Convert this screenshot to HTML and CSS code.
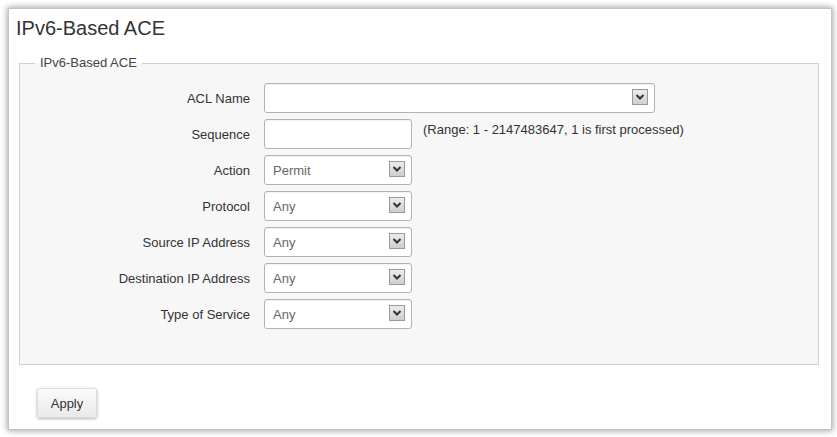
FILE: index.html
```html
<!DOCTYPE html>
<html>
<head>
<meta charset="utf-8">
<link rel="stylesheet" href="styles.css">
</head>
<body>
<div class="panel">
  <h1 class="title">IPv6-Based ACE</h1>
  <fieldset class="box">
    <legend class="legend">IPv6-Based ACE</legend>
    <div class="form">
      <label class="lbl">ACL Name</label>
      <div class="ctrl select wide"><span class="val"></span><span class="arrow"><svg width="10" height="8" viewBox="0 0 10 8"><path d="M1.5 2 L5 5.5 L8.5 2" fill="none" stroke="#333" stroke-width="2"/></svg></span></div>

      <label class="lbl">Sequence</label>
      <div class="line"><div class="ctrl input"></div><span class="hint">(Range: 1 - 2147483647, 1 is first processed)</span></div>

      <label class="lbl">Action</label>
      <div class="ctrl select"><span class="val">Permit</span><span class="arrow"><svg width="10" height="8" viewBox="0 0 10 8"><path d="M1.5 2 L5 5.5 L8.5 2" fill="none" stroke="#333" stroke-width="2"/></svg></span></div>

      <label class="lbl">Protocol</label>
      <div class="ctrl select"><span class="val">Any</span><span class="arrow"><svg width="10" height="8" viewBox="0 0 10 8"><path d="M1.5 2 L5 5.5 L8.5 2" fill="none" stroke="#333" stroke-width="2"/></svg></span></div>

      <label class="lbl">Source IP Address</label>
      <div class="ctrl select"><span class="val">Any</span><span class="arrow"><svg width="10" height="8" viewBox="0 0 10 8"><path d="M1.5 2 L5 5.5 L8.5 2" fill="none" stroke="#333" stroke-width="2"/></svg></span></div>

      <label class="lbl">Destination IP Address</label>
      <div class="ctrl select"><span class="val">Any</span><span class="arrow"><svg width="10" height="8" viewBox="0 0 10 8"><path d="M1.5 2 L5 5.5 L8.5 2" fill="none" stroke="#333" stroke-width="2"/></svg></span></div>

      <label class="lbl">Type of Service</label>
      <div class="ctrl select"><span class="val">Any</span><span class="arrow"><svg width="10" height="8" viewBox="0 0 10 8"><path d="M1.5 2 L5 5.5 L8.5 2" fill="none" stroke="#333" stroke-width="2"/></svg></span></div>
    </div>
  </fieldset>
  <button class="apply">Apply</button>
</div>
</body>
</html>
```

FILE: styles.css
```css
html, body {
  margin: 0;
  padding: 0;
  background: #ffffff;
}
body {
  padding: 8px 5px 7px 8px;
  font-family: "Liberation Sans", Arial, sans-serif;
  color: #333;
}
.panel {
  box-sizing: border-box;
  width: 824px;
  height: 422px;
  background: #fff;
  border: 1px solid #c4c4c4;
  box-shadow: 0 0 6px 1px rgba(0, 0, 0, 0.35);
  padding: 0 7px;
}
.title {
  margin: 7px 0 0 0;
  font-size: 20px;
  line-height: 24px;
  font-weight: normal;
  color: #333;
}
.box {
  box-sizing: border-box;
  width: 800px;
  margin: 15px 0 0 3px;
  padding: 12px 0 35px 0;
  border: 1px solid #d2d2d2;
  background: #f7f7f7;
  min-width: 0;
}
.legend {
  margin-left: 15px;
  padding: 0 5px;
  font-size: 13px;
  line-height: 16px;
  color: #444;
}
.form {
  display: grid;
  grid-template-columns: 230px auto;
  column-gap: 14px;
  row-gap: 6px;
  align-items: center;
  justify-items: start;
}
.lbl {
  justify-self: end;
  font-size: 13px;
  color: #333;
}
.ctrl {
  box-sizing: border-box;
  height: 30px;
  width: 148px;
  background: #fff;
  border: 1px solid #b3b3b3;
  border-radius: 3px;
  box-shadow: inset 0 1px 1px rgba(0,0,0,0.06);
}
.select {
  display: flex;
  align-items: center;
  justify-content: space-between;
  padding: 0 6px 0 8px;
}
.wide {
  width: 391px;
}
.val {
  font-size: 13px;
  color: #666;
}
.arrow {
  box-sizing: border-box;
  width: 16px;
  height: 16px;
  border: 1px solid #9a9a9a;
  background: linear-gradient(#ececec, #cfcfcf);
  display: flex;
  align-items: center;
  justify-content: center;
  margin-top: -2px;
}
.line {
  display: flex;
  align-items: flex-start;
  gap: 11px;
}
.hint {
  font-size: 13px;
  color: #333;
  padding-top: 3px;
}
.apply {
  display: block;
  box-sizing: border-box;
  width: 60px;
  height: 30px;
  margin: 23px 0 0 21px;
  font-family: "Liberation Sans", Arial, sans-serif;
  font-size: 13px;
  color: #333;
  background: linear-gradient(#fbfbfb, #e9e9e9);
  border: 1px solid #dedede;
  border-radius: 2px;
  box-shadow: 0 1px 3px rgba(0,0,0,0.3);
  padding: 0;
}
```
